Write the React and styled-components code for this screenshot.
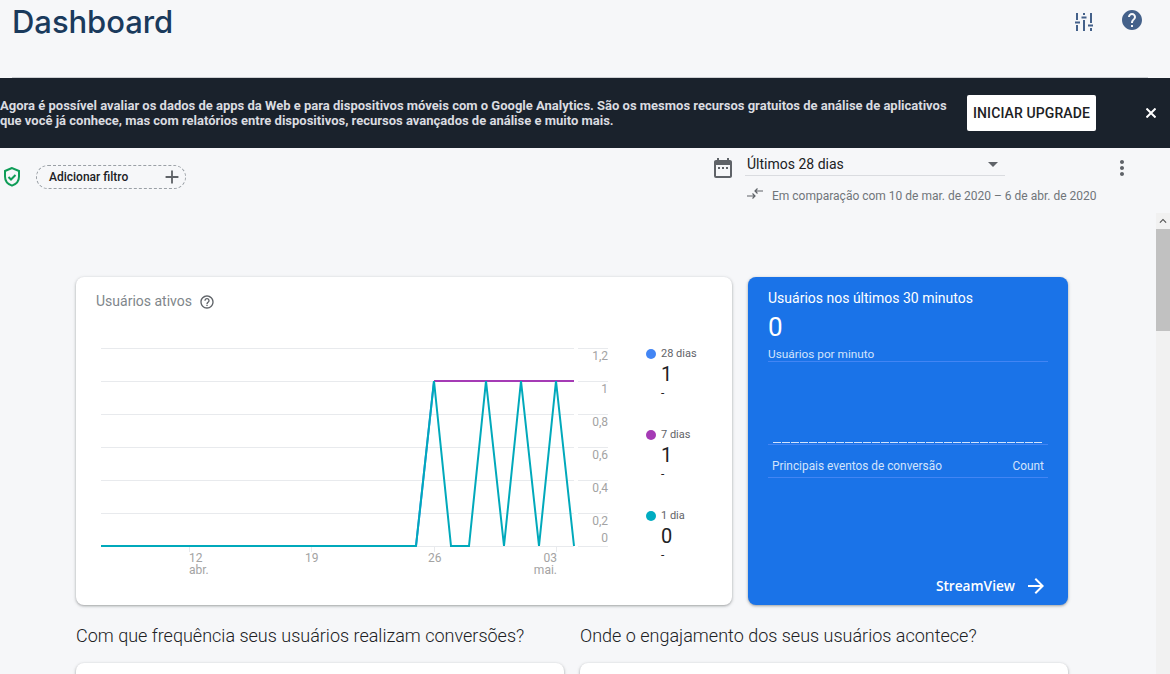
import React from "react";
import styled, { createGlobalStyle } from "styled-components";
import {
  MdHelp,
  MdDateRange,
  MdMoreVert,
  MdArrowDropDown,
  MdAdd,
  MdArrowForward,
  MdHelpOutline,
  MdKeyboardArrowUp,
} from "react-icons/md";

const Global = createGlobalStyle`
  html, body { margin: 0; padding: 0; height: 100%; overflow: hidden; background: #f6f7f9; }
  * { box-sizing: border-box; }
  body { font-family: Roboto, "Liberation Sans", sans-serif; }
`;

const Page = styled.div`
  width: 1170px;
  height: 674px;
  display: flex;
  flex-direction: column;
  overflow: hidden;
`;

const Header = styled.header`
  height: 78px;
  flex: none;
  margin: 0 22px 0 12px;
  border-bottom: 1px solid #cdd0d4;
  display: flex;
  justify-content: space-between;
  align-items: flex-start;
`;

const Title = styled.h1`
  margin: 0;
  font: 500 31px/44px Inter, "Open Sans", sans-serif;
  letter-spacing: -0.05px;
  color: #1a3a5c;
`;

const HeaderIcons = styled.div`
  display: flex;
  align-items: flex-start;
  gap: 27px;
  padding: 8px 4px 0 0;
  color: #44618a;
`;

const Banner = styled.div`
  height: 70px;
  flex: none;
  background: #1a222c;
  display: flex;
  align-items: center;
`;

const BannerText = styled.p`
  margin: 0;
  width: 967px;
  font: 700 13px/15px Roboto, sans-serif;
  color: #dadce0;
`;

const UpgradeButton = styled.button`
  width: 129px;
  height: 36px;
  border: 0;
  border-radius: 2px;
  background: #fff;
  color: #202124;
  font: 500 14px Roboto, sans-serif;
  letter-spacing: 0.1px;
  padding: 0;
`;

const BannerClose = styled.button`
  margin-left: 46px;
  width: 18px;
  height: 18px;
  padding: 4px;
  border: 0;
  background: none;
  color: #fff;
  display: flex;
`;

const Toolbar = styled.div`
  height: 65px;
  flex: none;
  display: flex;
  justify-content: space-between;
  align-items: flex-start;
`;

const FilterGroup = styled.div`
  display: flex;
  align-items: center;
  gap: 15px;
  padding: 17px 0 0 3px;
`;

const FilterChip = styled.button`
  width: 150px;
  height: 24px;
  border: 1px dashed #9aa0a6;
  border-radius: 12px;
  background: none;
  font: 500 12px Roboto, sans-serif;
  color: #202124;
  display: flex;
  align-items: center;
  justify-content: space-between;
  padding: 0 2px 0 12px;
  & svg { color: #5f6368; }
`;

const DateGroup = styled.div`
  display: flex;
  padding: 8px 36px 0 0;
`;

const CalendarSlot = styled.div`
  color: #5f6368;
  display: flex;
  padding: 0 10px 0 0;
`;

const DateColumn = styled.div`
  width: 368px;
  display: flex;
  flex-direction: column;
`;

const DateSelect = styled.div`
  width: 260px;
  height: 20px;
  border-bottom: 1px solid #dadce0;
  font: 400 14px/16px Roboto, sans-serif;
  color: #202124;
  display: flex;
  justify-content: space-between;
  padding-left: 2px;
  & svg { color: #5f6368; margin-top: -4px; }
`;

const CompareRow = styled.div`
  display: flex;
  align-items: center;
  gap: 9px;
  margin: 13px 0 0 2px;
  font: 400 12px/14px Roboto, sans-serif;
  color: #70757a;
  & svg { margin-top: -5px; }
`;

const MoreButton = styled.div`
  color: #5f6368;
  display: flex;
  margin: 0 0 0 -3px;
`;

const Body = styled.div`
  flex: 1;
  display: flex;
  min-height: 0;
`;

const Scroller = styled.main`
  flex: 1;
  padding: 64px 88px 0 76px;
  overflow: hidden;
`;

const TopRow = styled.div`
  display: flex;
  gap: 16px;
`;

const Card = styled.section`
  background: #fff;
  border-radius: 8px;
  box-shadow: 0 1px 2px rgba(60, 64, 67, 0.3), 0 1px 3px 1px rgba(60, 64, 67, 0.15);
  height: 328px;
`;

const ActiveCard = styled(Card)`
  width: 656px;
  padding: 16px 0 0 20px;
  display: flex;
  flex-direction: column;
`;

const CardTitle = styled.div`
  display: flex;
  align-items: center;
  gap: 7px;
  height: 17px;
  font: 400 14px/17px Roboto, sans-serif;
  color: #80868b;
  & svg { color: #5f6368; }
`;

const ChartRow = styled.div`
  display: flex;
  margin-top: 30px;
  margin-left: 5px;
`;

const Legend = styled.div`
  margin-left: 35px;
  display: flex;
  flex-direction: column;
  padding-top: 7px;
`;

const LegendItem = styled.div`
  height: 81px;
`;

const LegendLabel = styled.div`
  display: flex;
  align-items: center;
  gap: 5px;
  font: 400 11px/13px Roboto, sans-serif;
  color: #5f6368;
`;

const Dot = styled.span`
  width: 10px;
  height: 10px;
  border-radius: 50%;
  background: ${(p) => p.$color};
`;

const LegendValue = styled.div`
  margin: 2px 0 0 15px;
  font: 400 20px/24px Roboto, sans-serif;
  color: #202124;
`;

const LegendDelta = styled.div`
  margin: 1px 0 0 15px;
  font: 400 12px/12px Roboto, sans-serif;
  color: #202124;
`;

const LiveCard = styled(Card)`
  width: 320px;
  background: #1a73e8;
  padding: 13px 20px 0;
  display: flex;
  flex-direction: column;
  color: #fff;
  position: relative;
`;

const LiveTitle = styled.div`
  font: 400 14px/16px Roboto, sans-serif;
`;

const LiveValue = styled.div`
  font: 400 26px/30px Roboto, sans-serif;
  margin-top: 6px;
`;

const LiveSub = styled.div`
  font: 400 11.8px/14px Roboto, sans-serif;
  color: #d2e3fc;
  border-bottom: 1px solid #4285f4;
  margin-top: 5px;
  height: 15px;
`;

const MiniBars = styled.div`
  height: 83px;
  border-bottom: 1px solid #4285f4;
  display: flex;
  align-items: flex-end;
  gap: 1px;
  padding: 0 6px 1px 5px;
`;

const MiniBar = styled.span`
  flex: 1;
  height: 1px;
  background: #d2e3fc;
`;

const TableHead = styled.div`
  display: flex;
  justify-content: space-between;
  height: 33px;
  align-items: flex-end;
  padding: 0 4px 4px;
  border-bottom: 1px solid #4285f4;
  font: 400 11.85px/14px Roboto, sans-serif;
  color: #d2e3fc;
`;

const StreamLink = styled.div`
  margin-top: auto;
  margin-bottom: 7px;
  display: flex;
  justify-content: flex-end;
  align-items: center;
  gap: 9px;
  font: 600 13.7px/24px "Open Sans", sans-serif;
`;

const BottomRow = styled.div`
  display: grid;
  grid-template-columns: 488px 488px;
  gap: 16px;
  margin-top: 20px;
`;

const SectionTitle = styled.h2`
  margin: 0 0 16px;
  font: 300 18px/22px Roboto, sans-serif;
  color: #202124;
`;

const StubCard = styled(Card)`
  height: 200px;
`;

const Scrollbar = styled.div`
  width: 14px;
  flex: none;
  background: #f1f1f1;
  display: flex;
  flex-direction: column;
`;

const ScrollUp = styled.div`
  height: 16px;
  color: #505050;
  display: flex;
  justify-content: center;
  align-items: center;
`;

const ScrollThumb = styled.div`
  height: 102px;
  background: #c1c1c1;
`;

const TuneSvg = styled.svg`
  margin-top: 5px;
`;

const TuneIcon = () => (
  <TuneSvg width="18" height="18" viewBox="0 0 18 18" fill="none" stroke="currentColor" strokeWidth="2">
    <path d="M2 0v7M0 9.5h5M2 12v6M9 0v2M6.5 4.5h5M9 7v11M16 0v10M13 12.5h5M16 15v3" />
  </TuneSvg>
);

const CloseIcon = () => (
  <svg width="10" height="10" viewBox="0 0 10 10" fill="none" stroke="currentColor" strokeWidth="2">
    <path d="M0.5 0.5 9.5 9.5M9.5 0.5 0.5 9.5" />
  </svg>
);

const ShieldIcon = () => (
  <svg width="18" height="22" viewBox="0 0 18 22" fill="none" stroke="#0f9d58" strokeWidth="2">
    <path d="M9 2 2 5v5.5c0 4.3 3 7.8 7 9.1 4-1.3 7-4.8 7-9.1V5z" />
    <path d="m5.5 11 2.5 2.5 4.5-4.5" />
  </svg>
);

const CompareIcon = () => (
  <svg width="16" height="12" viewBox="0 0 16 12" fill="none" stroke="#5f6368" strokeWidth="1.2">
    <path d="M0 8h8M5.5 5.5 8 8l-2.5 2.5" />
    <path d="M16 3H8M10.5.5 8 3l2.5 2.5" />
  </svg>
);

const PLOT_X = 101;
const PLOT_Y = 340;
const gx = (x) => x - PLOT_X;
const gy = (y) => y - PLOT_Y;
const GRID = [348, 381, 414, 447, 480, 513, 546];
const AXIS = [
  ["1,2", 360],
  ["1", 393],
  ["0,8", 426],
  ["0,6", 459],
  ["0,4", 492],
  ["0,2", 525],
  ["0", 542],
];
const toPts = (arr) => arr.map(([x, y]) => `${gx(x)},${gy(y)}`).join(" ");
const SERIES = [
  [101, 546], [416, 546], [434, 381], [451, 546], [469, 546], [486, 381],
  [504, 546], [521, 381], [539, 546], [556, 381], [574, 546],
];

const AxisText = styled.text`
  font: 400 12px Roboto, sans-serif;
  fill: #a3a3a3;
`;

const ActiveChart = () => (
  <svg width="510" height="240" viewBox="0 0 510 240">
    {GRID.map((y) => (
      <g key={y} stroke="#e8eaed" strokeWidth="1">
        <line x1={0} x2={gx(574)} y1={gy(y) + 0.5} y2={gy(y) + 0.5} />
        <line x1={gx(578)} x2={gx(608)} y1={gy(y) + 0.5} y2={gy(y) + 0.5} />
      </g>
    ))}
    {[189.5, 311.5, 434.5, 556.5].map((x) => (
      <line key={x} x1={gx(x)} x2={gx(x)} y1={gy(546)} y2={gy(552)} stroke="#e8eaed" />
    ))}
    {AXIS.map(([t, y]) => (
      <AxisText key={t} x={gx(608)} y={gy(y)} textAnchor="end">{t}</AxisText>
    ))}
    <AxisText x={gx(189)} y={gy(562)}>12</AxisText>
    <AxisText x={gx(189)} y={gy(574)}>abr.</AxisText>
    <AxisText x={gx(305)} y={gy(562)}>19</AxisText>
    <AxisText x={gx(428)} y={gy(562)}>26</AxisText>
    <AxisText x={gx(557)} y={gy(562)} textAnchor="end">03</AxisText>
    <AxisText x={gx(557)} y={gy(574)} textAnchor="end">mai.</AxisText>
    <polyline points={toPts([[416, 546], [434, 381]])} fill="none" stroke="#4285f4" strokeWidth="2" />
    <polyline points={toPts([[434, 381], [574, 381]])} fill="none" stroke="#a53bb5" strokeWidth="2" />
    <polyline points={toPts(SERIES)} fill="none" stroke="#00a9bb" strokeWidth="2" />
  </svg>
);

const LEGEND = [
  { label: "28 dias", color: "#4285f4", value: "1" },
  { label: "7 dias", color: "#a53bb5", value: "1" },
  { label: "1 dia", color: "#00acc1", value: "0" },
];

export default function App() {
  return (
    <Page>
      <Global />
      <Header>
        <Title>Dashboard</Title>
        <HeaderIcons>
          <TuneIcon />
          <MdHelp size={24} />
        </HeaderIcons>
      </Header>
      <Banner>
        <BannerText>
          Agora é possível avaliar os dados de apps da Web e para dispositivos móveis com o Google Analytics. São os mesmos recursos gratuitos de análise de aplicativos<br />
          que você já conhece, mas com relatórios entre dispositivos, recursos avançados de análise e muito mais.
        </BannerText>
        <UpgradeButton>INICIAR UPGRADE</UpgradeButton>
        <BannerClose><CloseIcon /></BannerClose>
      </Banner>
      <Toolbar>
        <FilterGroup>
          <ShieldIcon />
          <FilterChip>Adicionar filtro <MdAdd size={22} /></FilterChip>
        </FilterGroup>
        <DateGroup>
          <CalendarSlot><MdDateRange size={24} /></CalendarSlot>
          <DateColumn>
            <DateSelect>Últimos 28 dias <MdArrowDropDown size={24} /></DateSelect>
            <CompareRow>
              <CompareIcon />
              Em comparação com 10 de mar. de 2020 – 6 de abr. de 2020
            </CompareRow>
          </DateColumn>
          <MoreButton><MdMoreVert size={24} /></MoreButton>
        </DateGroup>
      </Toolbar>
      <Body>
        <Scroller>
          <TopRow>
            <ActiveCard>
              <CardTitle>Usuários ativos <MdHelpOutline size={16} /></CardTitle>
              <ChartRow>
                <ActiveChart />
                <Legend>
                  {LEGEND.map((l) => (
                    <LegendItem key={l.label}>
                      <LegendLabel><Dot $color={l.color} />{l.label}</LegendLabel>
                      <LegendValue>{l.value}</LegendValue>
                      <LegendDelta>-</LegendDelta>
                    </LegendItem>
                  ))}
                </Legend>
              </ChartRow>
            </ActiveCard>
            <LiveCard>
              <LiveTitle>Usuários nos últimos 30 minutos</LiveTitle>
              <LiveValue>0</LiveValue>
              <LiveSub>Usuários por minuto</LiveSub>
              <MiniBars>
                {Array.from({ length: 30 }, (_, i) => <MiniBar key={i} />)}
              </MiniBars>
              <TableHead><span>Principais eventos de conversão</span><span>Count</span></TableHead>
              <StreamLink>StreamView <MdArrowForward size={24} /></StreamLink>
            </LiveCard>
          </TopRow>
          <BottomRow>
            <div>
              <SectionTitle>Com que frequência seus usuários realizam conversões?</SectionTitle>
              <StubCard />
            </div>
            <div>
              <SectionTitle>Onde o engajamento dos seus usuários acontece?</SectionTitle>
              <StubCard />
            </div>
          </BottomRow>
        </Scroller>
        <Scrollbar>
          <ScrollUp><MdKeyboardArrowUp size={16} /></ScrollUp>
          <ScrollThumb />
        </Scrollbar>
      </Body>
    </Page>
  );
}
